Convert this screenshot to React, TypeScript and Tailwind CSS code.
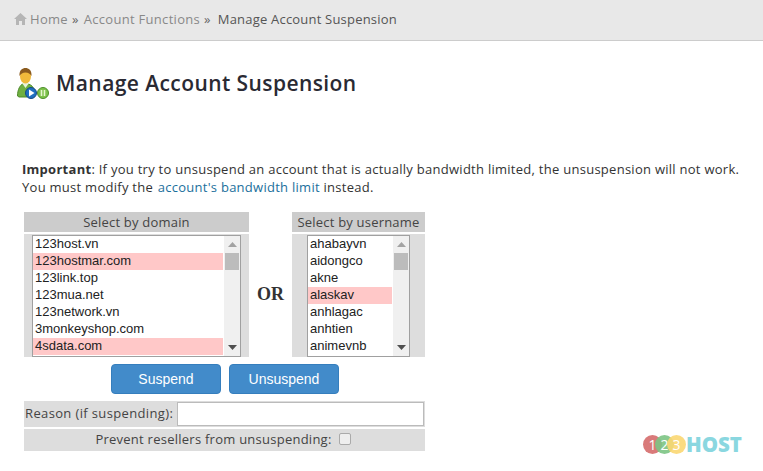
const domains = [
  { name: '123host.vn' },
  { name: '123hostmar.com', suspended: true },
  { name: '123link.top' },
  { name: '123mua.net' },
  { name: '123network.vn' },
  { name: '3monkeyshop.com' },
  { name: '4sdata.com', suspended: true },
];

const users = [
  { name: 'ahabayvn' },
  { name: 'aidongco' },
  { name: 'akne' },
  { name: 'alaskav', suspended: true },
  { name: 'anhlagac' },
  { name: 'anhtien' },
  { name: 'animevnb' },
];

function ListBox({ items, className }: { items: { name: string; suspended?: boolean }[]; className: string }) {
  return (
    <div className={`flex h-[122px] border border-[#a0a0a0] bg-white ${className}`}>
      <ul className="flex-1 min-w-0 font-['Liberation_Sans',sans-serif] text-[13px] leading-[16px] text-[#222]">
        {items.map((item) => (
          <li key={item.name} className={`h-[17px] pl-[2px] ${item.suspended ? 'bg-[#ffc8c8]' : ''}`}>
            {item.name}
          </li>
        ))}
      </ul>
      {/* Scrollbar */}
      <div className="w-[17px] flex flex-col bg-[#f0f0f0] border-l border-white">
        <div className="h-[17px] flex items-center justify-center">
          <svg width="9" height="5" viewBox="0 0 9 5"><path d="M4.5 0L9 5H0z" fill="#a3a3a3" /></svg>
        </div>
        <div className="h-[17px] mx-px bg-[#bcbcbc]"></div>
        <div className="flex-1"></div>
        <div className="h-[17px] flex items-center justify-center">
          <svg width="9" height="5" viewBox="0 0 9 5"><path d="M0 0h9L4.500 5z" fill="#505050" /></svg>
        </div>
      </div>
    </div>
  );
}

function UserIcon() {
  return (
    <svg width="34" height="34" viewBox="0 0 34 34">
      <path d="M0.500 30c0-7 3-11 5-12l3 2 3-2c3 1 5 3 5.500 6l-7 7H2z" fill="#6fb041" stroke="#4f8a2c" />
      <path d="M5 17l3.500 5 3.500-5z" fill="#eaf4dc" />
      <ellipse cx="8.500" cy="10.500" rx="5.500" ry="7" fill="#f0b93a" />
      <path d="M2.500 10c-.5-6 3-8 6-8s6.500 2 6 8c-1.500-2-3-3.500-6-3.500s-4.500 1.500-6 3.500z" fill="#8a5a1e" />
      <circle cx="14" cy="27" r="5.500" fill="#1f6fc0" stroke="#134a85" />
      <path d="M12 23.500l5.500 3.500-5.500 3.500z" fill="#fff" />
      <circle cx="26" cy="27" r="5.500" fill="#7cc24a" stroke="#4d8f2a" />
      <path d="M23.700 24h1.600v6h-1.600zM26.700 24h1.600v6h-1.600z" fill="#e6f6cf" />
    </svg>
  );
}

function HomeIcon() {
  return (
    <svg width="13" height="12" viewBox="0 0 13 12" className="-mt-[2px]">
      <path d="M6.500 0L13 6h-2v6H8V8H5v4H2V6H0z" fill="#b5b5b5" />
    </svg>
  );
}

function Logo() {
  return (
    <div className="flex items-center font-['Open_Sans',sans-serif]">
      <div className="flex">
        <span className="w-[19px] h-[19px] rounded-full bg-[#d97a7a] text-white text-[14px] leading-[19px] text-center">1</span>
        <span className="w-[19px] h-[19px] -ml-[7px] rounded-full bg-[#7cc484]/90 text-white text-[14px] leading-[19px] text-center">2</span>
        <span className="w-[19px] h-[19px] -ml-[7px] rounded-full bg-[#fbd772]/90 text-white text-[14px] leading-[19px] text-center">3</span>
      </div>
      <span className="text-[20.500px] leading-[20px] font-extrabold text-[#8ad7e0]">HOST</span>
    </div>
  );
}

export default function App() {
  return (
    <div className="relative w-[763px] h-[471px] overflow-hidden bg-white font-['Open_Sans',sans-serif] text-[13px] text-[#333]">
      {/* Breadcrumb */}
      <div className="h-[41px] pl-[14px] flex items-center gap-[3px] bg-[#e8e8e8] border-b border-[#cccccc] text-[#888] tracking-[0.3px]">
        <HomeIcon />
        <span>Home</span>
        <span className="ml-[1px] text-[#666]">»</span>
        <span className="ml-[2px]">Account Functions</span>
        <span className="ml-[1px] text-[#666]">»</span>
        <span className="ml-[4px] text-[#555] tracking-[0.2px]">Manage Account Suspension</span>
      </div>

      {/* Title */}
      <div className="mt-[25px] pl-[17px] flex items-center gap-[5px]">
        <UserIcon />
        <h1 className="text-[21px] leading-[34px] font-semibold text-[#2a2a33] tracking-[0.42px]">Manage Account Suspension</h1>
      </div>

      {/* Notice */}
      <p className="mt-[60px] ml-[22px] leading-[18px] text-[#333] tracking-[0.27px]">
        <b>Important</b>: If you try to unsuspend an account that is actually bandwidth limited, the unsuspension will not work.
        <br />
        You must modify the <a className="ml-px text-[#1b6f9c]">account's bandwidth limit</a> instead.
      </p>

      {/* Form */}
      <div className="mt-[16px] ml-[24px] w-[401px]">
        <div className="flex">
          <div className="w-[225px]">
            <div className="h-[20px] mb-[2px] bg-[#cccccc] text-center leading-[20px] text-[#444] tracking-[0.2px]">Select by domain</div>
            <div className="h-[123px] px-[8px] pt-px bg-[#dddddd]">
              <ListBox items={domains} className="w-[209px]" />
            </div>
          </div>
          <div className="w-[43px] flex items-center justify-center pt-[20px] font-['Liberation_Serif',serif] font-bold text-[18px] text-[#333]">OR</div>
          <div className="w-[133px]">
            <div className="h-[20px] mb-[2px] bg-[#cccccc] text-center leading-[20px] text-[#444] tracking-[0.2px]">Select by username</div>
            <div className="h-[123px] px-[15px] pt-px bg-[#dddddd]">
              <ListBox items={users} className="w-[103px]" />
            </div>
          </div>
        </div>

        {/* Buttons */}
        <div className="mt-[7px] flex justify-center gap-[8px] pl-[1px] font-['Liberation_Sans',sans-serif] text-[14px]">
          <button className="w-[110px] h-[30px] rounded-[4px] bg-[#428bca] border border-[#357ebd] text-white">Suspend</button>
          <button className="w-[110px] h-[30px] rounded-[4px] bg-[#428bca] border border-[#357ebd] text-white">Unsuspend</button>
        </div>

        {/* Reason */}
        <div className="mt-[7px] h-[26px] flex items-center bg-[#dddddd] tracking-[0.36px] text-[#444]">
          <span className="w-[153px] pl-[1px]">Reason (if suspending):</span>
          <input className="w-[247px] h-[24px] bg-white border border-[#bbbbbb]" />
        </div>

        {/* Prevent */}
        <div className="mt-[2px] h-[22px] flex items-center justify-center gap-[7px] pr-[3px] bg-[#dddddd] tracking-[0.25px] text-[#444]">
          <span>Prevent resellers from unsuspending:</span>
          <span className="w-[12px] h-[12px] mb-[2px] rounded-[2px] border border-[#aaa] bg-[#eeeeee]"></span>
        </div>
      </div>

      {/* Watermark logo over the page */}
      <div className="absolute left-[643px] top-[434px]">
        <Logo />
      </div>
    </div>
  );
}
